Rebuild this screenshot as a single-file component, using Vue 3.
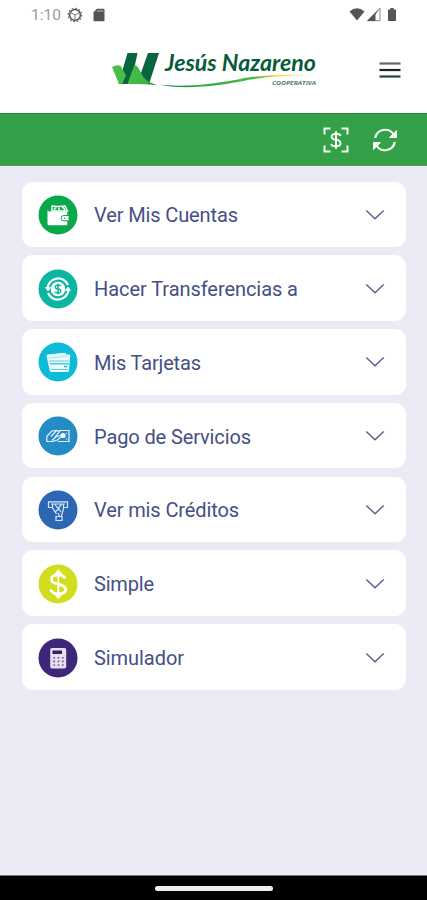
<script setup>
const items = [
  { label: 'Ver Mis Cuentas', icon: 'wallet', width: 144 },
  { label: 'Hacer Transferencias a', icon: 'transfer', width: 204 },
  { label: 'Mis Tarjetas', icon: 'cards', width: 107 },
  { label: 'Pago de Servicios', icon: 'pay', width: 157 },
  { label: 'Ver mis Créditos', icon: 'credit', width: 145 },
  { label: 'Simple', icon: 'dollar', width: 60 },
  { label: 'Simulador', icon: 'calculator', width: 90 },
]
</script>

<template>
  <div class="screen">
    <div class="status">
      <span class="time">1:10</span>
      <svg class="gear" width="16" height="16" viewBox="0 0 16 16">
        <circle cx="8" cy="8" r="5.4" fill="none" stroke="#555" stroke-width="1.5" />
        <circle cx="8" cy="8" r="6.7" fill="none" stroke="#666" stroke-width="1.2" stroke-dasharray="1.7 1.8" />
        <path d="M8 8v5M8 8L3.8 5.8M8 8l4.2-2.2" stroke="#777" stroke-width="1" />
      </svg>
      <svg class="sd" width="12" height="14" viewBox="0 0 12 14">
        <path d="M4 .7h6.4q1.1 0 1.1 1.1v10.4q0 1.100-1.100 1.100H1.600q-1.100 0-1.100-1.100V4.300z" fill="#555" />
        <path d="M4 3h6.500" stroke="#aaa" stroke-width="1.200" />
      </svg>
      <svg class="signals" width="50" height="16" viewBox="0 0 50 16">
        <path d="M.5 4.500Q8-1.800 15.500 4.500L8 13.500z" fill="#555" />
        <path d="M18.500 13.700L31 1.200V13.700z" fill="#fff" stroke="#888" stroke-width="1" />
        <path d="M18 14L30.500 1.500l-4 6V14z" fill="#555" />
        <path d="M41.300 1h3.400v1.500H47V14h-8V2.500h2.300z" fill="#555" />
      </svg>
    </div>
    <header class="header">
      <svg class="logo" width="216" height="46" viewBox="108 46 216 46">
        <defs>
          <linearGradient id="swoosh" x1="0" x2="1">
            <stop offset="0" stop-color="#08733b" />
            <stop offset=".25" stop-color="#2cab43" />
            <stop offset=".62" stop-color="#4db948" />
            <stop offset=".76" stop-color="#f2dc3b" />
            <stop offset="1" stop-color="#f6e78c" />
          </linearGradient>
          <linearGradient id="leg" x1="0" x2="1">
            <stop offset="0" stop-color="#4abf45" />
            <stop offset=".6" stop-color="#3db447" />
            <stop offset="1" stop-color="#08733b" />
          </linearGradient>
        </defs>
        <path d="M127.500 53H137.500L131 84H118.500z" fill="#07653f" />
        <path d="M148 53h11L149 84h-12z" fill="#07653f" />
        <path d="M112 67q4.500-2.500 8.500-1.200l5.500 9.500-3.800 8.700H119z" fill="#4abf45" />
        <path d="M127.500 84L134.500 64.500Q138.500 66.500 140.800 72.500Q144.500 82 157.500 85.200Q150 84.200 143 84.200z" fill="url(#leg)" />
        <path d="M157 84.300C183 88 216 84 246 77.700Q276 73.200 316 75.300Q281 74.800 250 79.500C219 86.500 183 90 157 84.300z" fill="url(#swoosh)" />
        <text x="165" y="71.200" class="brand" textLength="151" lengthAdjust="spacingAndGlyphs">Jesús Nazareno</text>
        <text x="272" y="84.800" class="sub" textLength="44" lengthAdjust="spacingAndGlyphs">COOPERATIVA</text>
      </svg>
      <svg class="menu" width="22" height="18" viewBox="0 0 22 18">
        <path d="M.5 2.500h21" stroke="#666" stroke-width="2.200" />
        <path d="M.5 9h21" stroke="#222" stroke-width="2.200" />
        <path d="M.5 15.500h21" stroke="#194b2a" stroke-width="2.200" />
      </svg>
    </header>
    <div class="toolbar">
      <svg width="26" height="26" viewBox="0 0 26 26" fill="none" stroke="#f3fbf3" stroke-width="2">
        <path d="M1.500 7.500v-6h6M18.500 1.500h6v6M24.500 18.500v6h-6M7.500 24.500h-6v-6" />
        <path d="M17.800 9Q17 6.800 13 6.800T8.600 9.800Q8.600 12.300 13 12.800T17.500 16.200Q17.500 19.200 13 19.200T8.200 16.800M13 4.300v17.400" />
      </svg>
      <svg width="26" height="24" viewBox="0 0 26 24" fill="none" stroke="#f3fbf3" stroke-width="2.200">
        <path d="M3.200 10A10 10 0 0 1 21.500 6.500M22.800 14A10 10 0 0 1 4.500 17.500" />
        <path d="M24.500 2.500v7h-7zM1.500 21.500v-7h7z" fill="#f3fbf3" stroke-width="1" />
      </svg>
    </div>
    <main class="content">
      <div v-for="item in items" :key="item.icon" class="card">
        <svg class="icon" :class="item.icon" width="40" height="40" viewBox="0 0 40 40">
          <circle cx="20" cy="20" r="19.500" class="disc" />
          <g v-if="item.icon === 'wallet'">
            <path d="M14 16v-5l6 .5 7-.5 2.500 5z" fill="none" stroke="#fff" stroke-width="1.400" />
            <path d="M16.500 15.500q-.5-3 2-2.500M21 16v-3.500M24 12.500q3 0 2.500 3.500" fill="none" stroke="#fff" stroke-width="1.500" />
            <path d="M9.500 15.200q1 1.300 3 1.300H28q1.300 0 1.300 1.300v11.400q0 1-1 1H11q-1.500 0-1.500-1.500z" fill="#fff" />
            <path d="M30.500 20.500h-4.500q-3 0-3 2.700t3 2.700h4.500" fill="#fff" stroke="#08a84b" stroke-width="1" />
            <circle cx="26.500" cy="23.200" r=".8" fill="#08a84b" />
          </g>
          <g v-else-if="item.icon === 'transfer'" fill="none" stroke="#fff">
            <path d="M9.500 19A10.700 10.700 0 0 1 30 16M30.500 21A10.700 10.700 0 0 1 10 24" stroke-width="2.200" />
            <path d="M7.500 18.500h5l-2.500 3.500zM32.500 21.500h-5l2.500-3.500z" fill="#fff" stroke-width=".8" />
            <circle cx="20" cy="20" r="7.300" fill="#fff" stroke="none" />
            <path d="M22.700 17.300q-.5-1.300-2.700-1.300-2.600 0-2.600 2t2.600 2 2.700 2-2.700 2-2.800-1.400M20 14.500v11" stroke="#0cb5a2" stroke-width="1.500" />
          </g>
          <g v-else-if="item.icon === 'cards'">
            <path d="M8.500 14q0-1.200 1.200-1.400L26 10.800q1.800-.2 2.300 1.700H31q1.200 0 1.200 1.300L31 28.500q-.2 1.500-1.700 1.500H13.500q-1.500 0-1.800-1.500z" fill="#e9fcff" />
            <path d="M9.500 16.300L29 14.200" stroke="#8be0ee" stroke-width=".8" />
            <path d="M11 19h20.500M13 27.500H30" fill="none" stroke="#5dd0e3" stroke-width="1.200" />
            <path d="M12 21.800h19" stroke="#25bdd8" stroke-width="1.200" />
            <path d="M26 24.500h3" stroke="#16b9d6" stroke-width="1.500" />
          </g>
          <g v-else-if="item.icon === 'pay'" fill="none" stroke="#eaf6ff" stroke-width="1.200">
            <path d="M21 14.500h10v11H20M8.800 20.500l5-5.500 4.200-.5M8.800 20.500v5h5.700l5-1.500 3-3M13 20.500l5.500-6 3 1-4 5 5-1" />
            <path d="M14 24.500l4.500-4" />
            <circle cx="25" cy="19.500" r="2.600" fill="#fff" stroke="none" />
            <path d="M28.500 17v1M28.500 22.500v1" />
          </g>
          <g v-else-if="item.icon === 'credit'" fill="none" stroke="#d8e9ff" stroke-width="1.200">
            <path d="M14 17.500h-3.500v-5.700h19v5.700H26M13 14h14M14.500 14v3.800l4 6.200M25.500 14v4.500L23.500 26M17 14.500l3 4 3.500-4M17.500 21.500l3.500-2.500 2 3M18 26.500h6v4h-6zM20 23l1.500 3" />
          </g>
          <g v-else-if="item.icon === 'dollar'" fill="none" stroke="#fff" stroke-width="2.800">
            <path d="M27 14.500Q25.500 10.800 20.500 10.800C16 10.800 13.500 12.700 13.500 15.200C13.500 18.300 16 19 20.300 20.200C25 21.500 27.700 22.500 27.700 25.500C27.700 28.300 25 29.900 20.500 29.900Q14.500 29.900 12.500 25.500" />
            <path d="M20.300 7.500v25" stroke-width="1.800" />
            <path d="M17.800 9.500l2.500-3 2.500 3zM17.800 31l2.500 3 2.500-3z" fill="#fff" stroke-width="1.500" />
          </g>
          <g v-else>
            <rect x="12.200" y="10" width="16" height="20.500" rx="1.700" fill="#e8ddf2" />
            <path d="M14.500 12.500h9.500v3.500h-9.500z" fill="#342160" />
            <path d="M15.300 19.800h10.500M15.300 23.400h10.500M15.300 27h10.500" stroke="#75609a" stroke-width="1.600" stroke-dasharray="1.800 2.500" />
          </g>
        </svg>
        <svg class="label" height="30" :width="item.width + 4" :viewBox="`0 0 ${item.width + 4} 30`">
          <text x="0" y="22" :textLength="item.width">{{ item.label }}</text>
        </svg>
        <svg class="chevron" width="20" height="12" viewBox="0 0 20 12">
          <path d="M1.300 1.500l8.700 8.300 8.700-8.300" fill="none" stroke="#5a5b91" stroke-width="1.400" />
        </svg>
      </div>
    </main>
    <footer class="nav"><span class="pill"></span></footer>
  </div>
</template>

<style>
body { margin: 0; }
</style>

<style scoped>
.screen { width: 427px; height: 900px; display: flex; flex-direction: column; background: #ebebf6; font-family: Roboto, sans-serif; overflow: hidden; }
.status { height: 30px; box-sizing: border-box; padding: 0 28px 0 31px; display: flex; align-items: center; background: #fff; flex: none; }
.time { font-size: 15.500px; line-height: 30px; color: #999; width: 36px; letter-spacing: 0; }
.sd { margin-left: 10px; }
.signals { margin-left: auto; }
.header { height: 83px; flex: none; display: flex; align-items: flex-start; background: #fff; padding: 16px 26px 0 108px; box-sizing: border-box; justify-content: space-between; }
.menu { margin-top: 15px; }
.brand { font: italic 700 22.500px Lato, sans-serif; fill: #075b3b; }
.sub { font: italic 700 5.800px "Open Sans", sans-serif; fill: #4d7d68; }
.toolbar { height: 53px; flex: none; display: flex; align-items: center; justify-content: flex-end; gap: 23px; padding-right: 29px; box-sizing: border-box; background: #34a047; border-top: 1px solid #268639; border-bottom: 1px solid #43a555; }
.content { flex: 1; min-height: 0; padding: 15.500px 21px 0 22px; display: flex; flex-direction: column; gap: 8.300px; }
.card { height: 65.500px; flex: none; display: flex; align-items: center; background: #fff; border-radius: 11px; box-sizing: border-box; padding: 1px 21.500px 0 16px; }
.icon { margin-right: 16px; }
.wallet .disc { fill: #08a84b; }
.transfer .disc { fill: #0cb5a2; }
.cards .disc { fill: #0cbbd8; }
.pay .disc { fill: #258bc5; }
.credit .disc { fill: #2b67b3; }
.dollar .disc { fill: #d2dd20; }
.calculator .disc { fill: #3d2779; }
.wallet.icon .disc { fill: #08a84b; }
.label { margin-top: 1px; }
.label text { font: 400 20px Roboto, sans-serif; fill: #454f85; }
.chevron { margin-left: auto; }
.nav { height: 25px; flex: none; background: #000; display: flex; justify-content: center; align-items: center; border-top: 1px solid #777; box-sizing: border-box; }
.pill { width: 118px; height: 5px; border-radius: 2.500px; background: #eee; }
</style>
